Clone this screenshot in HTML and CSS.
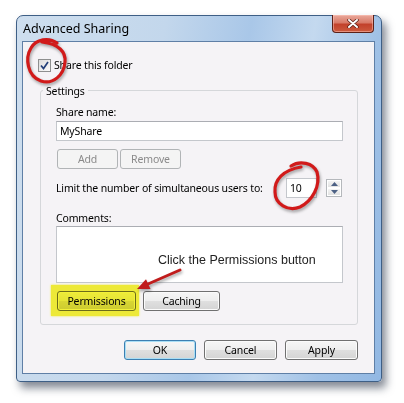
FILE: index.html
```
<!DOCTYPE html>
<html>
<head>
<meta charset="utf-8">
<link rel="stylesheet" href="styles.css">
</head>
<body>
<div class="window">
  <div class="titlebar">
    <span class="title">Advanced Sharing</span>
    <div class="close">
      <svg width="12" height="9" viewBox="0 0 12 9"><path d="M2 1 L10 8 M10 1 L2 8" stroke="#5a2018" stroke-width="3.4" stroke-linecap="round"/><path d="M2 1 L10 8 M10 1 L2 8" stroke="#ffffff" stroke-width="1.9" stroke-linecap="round"/></svg>
    </div>
  </div>
  <div class="client">
    <div class="check-row">
      <span class="checkbox"><svg width="9" height="9" viewBox="0 0 9 9"><path d="M1 4.5 L3.5 7.5 L8 1" fill="none" stroke="#23407a" stroke-width="1.7"/></svg></span>
      <span>Share this folder</span>
    </div>
    <div class="group">
      <span class="legend">Settings</span>
      <div class="label first">Share name:</div>
      <div class="field">MyShare</div>
      <div class="btn-row small">
        <button class="btn disabled w61">Add</button>
        <button class="btn disabled w61">Remove</button>
      </div>
      <div class="limit-row">
        <span>Limit the number of simultaneous users to:</span>
        <div class="num">10</div>
        <div class="spin">
          <div class="spin-btn"><svg width="7" height="4" viewBox="0 0 7 4"><path d="M0 4 L3.5 0 L7 4Z" fill="#4d6185"/></svg></div>
          <div class="spin-btn"><svg width="7" height="4" viewBox="0 0 7 4"><path d="M0 0 L3.5 4 L7 0Z" fill="#4d6185"/></svg></div>
        </div>
      </div>
      <div class="label comments">Comments:</div>
      <div class="textarea"></div>
      <div class="btn-row perm">
        <button class="btn w79">Permissions</button>
        <button class="btn w77">Caching</button>
      </div>
    </div>
    <div class="footer">
      <button class="btn default w72">OK</button>
      <button class="btn w73">Cancel</button>
      <button class="btn w73">Apply</button>
    </div>
  </div>
</div>

<div class="highlight"></div>
<div class="callout">Click the Permissions button</div>
<svg class="marks" width="404" height="403" viewBox="0 0 404 403">
  <g fill="none" stroke="#d11a1a" stroke-width="3.2" stroke-linecap="round">
    <path d="M57 43 C49 37 36 39 31 48 C25 58 27 76 41 81 C53 85 64 75 65 62 C66 52 59 44 42 42"/>
    <path d="M291 166 C300 160 313 163 317 172 C321 186 312 201 300 207 C288 212 275 204 275 192 C274 180 283 170 301 167"/>
  </g>
  <path d="M180 270 L148 284" stroke="#c01c1c" stroke-width="3" stroke-linecap="round"/>
  <path d="M137 289 L146 279.3 L150.5 289 Z" fill="#c01c1c"/>
</svg>
</body>
</html>
```
FILE: styles.css
```
* { box-sizing: border-box; }
html, body { margin: 0; padding: 0; }
body {
  width: 404px;
  height: 403px;
  overflow: hidden;
  position: relative;
  background: #ffffff;
  font-family: "Noto Sans", "Open Sans", sans-serif;
  font-size: 10.5px;
  letter-spacing: -0.15px;
  color: #000;
}
.window {
  margin: 15px 0 0 16px;
  width: 366px;
  height: 367px;
  border: 1px solid #3e5f86;
  border-radius: 7px 7px 4px 4px;
  background: linear-gradient(100deg, #cedeee 0%, #c3d7ec 35%, #a9c7e8 55%, #c4d9ef 70%, #a0c1e6 85%, #92b8e3 100%);
  padding: 0 6px 7px 5px;
  box-shadow: 4px 6px 9px rgba(30, 40, 60, 0.55);
}
.titlebar {
  height: 25px;
  display: flex;
  justify-content: space-between;
  align-items: flex-start;
}
.title {
  padding-left: 1px;
  line-height: 25px;
  font-size: 12.5px;
  letter-spacing: 0;
  color: #000;
}
.close {
  width: 42px;
  height: 18px;
  margin-top: -1px;
  margin-right: 1px;
  border: 1px solid #5c2118;
  border-top: none;
  border-radius: 0 0 4px 4px;
  background: linear-gradient(#eaa99c 0%, #d87a68 45%, #c2412b 55%, #cc5a3e 100%);
  box-shadow: inset 0 0 0 1px rgba(255, 200, 190, 0.5);
  display: flex;
  align-items: center;
  justify-content: center;
}
.client {
  height: 333px;
  border: 1px solid #5f7fa6;
  background: #f5f3f6;
  padding-top: 15px;
}
.check-row {
  height: 16px;
  display: flex;
  align-items: center;
  gap: 3px;
  margin-left: 15px;
}
.checkbox {
  width: 13px;
  height: 13px;
  border: 1px solid #8e8f8f;
  background: linear-gradient(135deg, #dcdcdc, #fbfbfb);
  display: flex;
  align-items: center;
  justify-content: center;
}
.group {
  margin: 17px 16px 0 17px;
  border: 1px solid #d5d7da;
  border-radius: 3px;
  padding: 0 14px 13px 15px;
  display: flex;
  flex-direction: column;
}
.legend {
  align-self: flex-start;
  margin: -8px 0 0 -13px;
  padding: 0 3px;
  line-height: 16px;
  background: #f5f3f6;
}
.label { line-height: 16px; }
.label.first { margin-top: 5px; }
.label.comments { margin-top: 12px; }
.field {
  margin-top: 1px;
  height: 20px;
  border: 1px solid #c4c7cc;
  border-top-color: #abadb3;
  background: #fff;
  padding-left: 3px;
  line-height: 18px;
}
.btn-row {
  display: flex;
}
.btn-row.small { margin-top: 8px; gap: 2px; padding-left: 1px; }
.btn-row.perm { margin-top: 8px; gap: 7px; padding-left: 1px; }
.btn {
  height: 20px;
  padding: 0;
  font: inherit;
  letter-spacing: inherit;
  color: #000;
  border: 1px solid #707070;
  border-radius: 3px;
  background: linear-gradient(#f6f6f6 0%, #eeeeee 48%, #dfdfdf 52%, #d4d4d4 100%);
  box-shadow: inset 0 0 0 1px #fbfbfb;
}
.btn.disabled {
  color: #8a8a8a;
  border-color: #b1b4b6;
  background: #f4f4f4;
  box-shadow: none;
}
.btn.default {
  border-color: #3c7fb1;
  box-shadow: inset 0 0 0 1px #a9def5;
}
.w61 { width: 61px; }
.w72 { width: 72px; }
.w73 { width: 73px; }
.w77 { width: 77px; }
.w79 { width: 79px; }
.limit-row {
  margin-top: 9px;
  height: 20px;
  display: flex;
  align-items: center;
}
.limit-row span { flex: 1; }
.num {
  width: 31px;
  height: 20px;
  border: 1px solid #c4c7cc;
  background: #fff;
  padding-left: 3px;
  line-height: 18px;
}
.spin {
  margin: 0 1px 0 9px;
  width: 16px;
  height: 18px;
  border: 1px solid #b5b8bc;
  display: flex;
  flex-direction: column;
}
.spin-btn {
  flex: 1;
  display: flex;
  align-items: center;
  justify-content: center;
  background: linear-gradient(#f4f4f4, #e2e2e2);
  border: 1px solid #fff;
}
.textarea {
  height: 57px;
  border: 1px solid #c4c7cc;
  border-top-color: #abadb3;
  background: #fff;
}
.footer {
  margin-top: 15px;
  display: flex;
  justify-content: flex-end;
  gap: 8px;
  padding-right: 16px;
}
.highlight {
  position: absolute;
  left: 51px;
  top: 285px;
  width: 88px;
  height: 31px;
  background: #f7f53a;
  mix-blend-mode: multiply;
  box-shadow: 0 0 2px #f7f53a;
}
.callout {
  position: absolute;
  left: 158px;
  top: 252px;
  font-family: "Liberation Sans", Arial, sans-serif;
  font-size: 12.5px;
  letter-spacing: 0;
  line-height: 16px;
  color: #222;
}
.marks {
  position: absolute;
  left: 0;
  top: 0;
  pointer-events: none;
  filter: drop-shadow(1px 2px 1.5px rgba(0, 0, 0, 0.35));
}
```
